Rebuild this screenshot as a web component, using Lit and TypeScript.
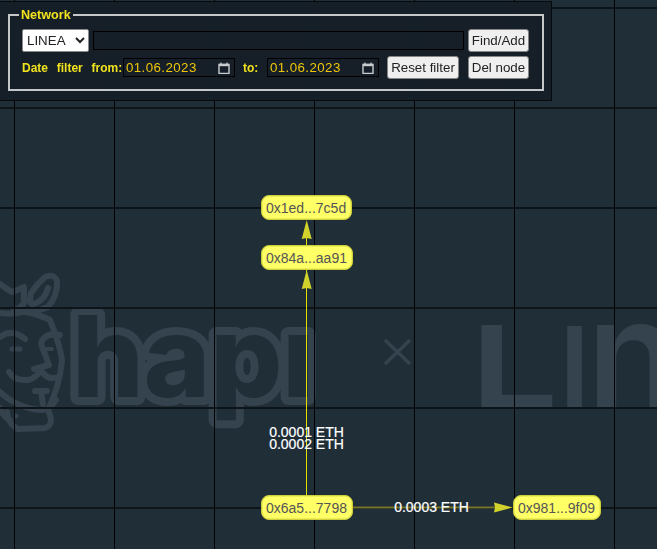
import { LitElement, html, css, svg } from "lit";
import { customElement } from "lit/decorators.js";

const nodes = [
  { label: "0x1ed...7c5d", x: 261, y: 195 },
  { label: "0x84a...aa91", x: 261, y: 245 },
  { label: "0x6a5...7798", x: 261, y: 495 },
  { label: "0x981...9f09", x: 513, y: 495 },
];
const edgeLabels = [
  { label: "0.0001 ETH", x: 306.5, y: 432 },
  { label: "0.0002 ETH", x: 306.5, y: 444 },
  { label: "0.0003 ETH", x: 431.5, y: 507 },
];

@customElement("app-root")
export class AppRoot extends LitElement {
  static styles = css`
    :host { display: block; width: 657px; height: 549px; overflow: hidden; }
    .canvas {
      position: relative; width: 657px; height: 549px; overflow: hidden;
      background-color: #202e38; font-family: "Liberation Sans", Arial, sans-serif;
    }
    .layer { position: absolute; left: 0; top: 0; display: block; }
    .grid {
      position: absolute; inset: 0;
      background-image:
        linear-gradient(90deg, #000 1px, transparent 1px),
        linear-gradient(180deg, #0d151b 2px, transparent 2px);
      background-size: 100px 100px;
      background-position: 14px 0, 0 7px;
    }
    .logo-letters { font-family: "Inter", "Noto Sans", sans-serif; font-weight: 800; }
    .logo-thin { font-family: "Inter", "Liberation Sans", sans-serif; font-weight: 600; }
    .node {
      position: absolute; box-sizing: border-box; height: 25px; padding: 0 5px 0 4px;
      display: flex; align-items: center; justify-content: center;
      background: #ffff66; border: 1px solid #cfcf3c; border-radius: 8px;
      box-shadow: inset 0 0 0 0.5px #dcdc48;
      font-size: 14px; color: #555; white-space: nowrap;
    }
    .edge-label {
      position: absolute; transform: translate(-50%, -50%);
      font-size: 14px; line-height: 14px; color: #fff; white-space: nowrap;
      -webkit-text-stroke: 0.2px #fff;
    }
    .panel {
      position: absolute; left: 0; top: 1px; box-sizing: border-box;
      width: 552px; height: 100px; padding: 6px 7px 0 8px;
      background: rgba(20, 30, 38, 0.88);
      backdrop-filter: blur(3px);
      border: 1px solid #060a0d; border-left: none;
    }
    fieldset {
      margin: 0; box-sizing: border-box; height: 83px; width: 535px; padding: 7px 13px 0 12px;
      border: 2px solid #c4c8c8; display: flex; flex-direction: column;
    }
    legend {
      padding: 0 2px; margin-left: -3px; color: #f0e21e;
      font-size: 12.6px; line-height: 14px; font-weight: 700;
    }
    .row { display: flex; align-items: center; height: 23px; }
    .row + .row { margin-top: 4px; }
    select {
      box-sizing: border-box; width: 67px; height: 23px; margin: 0 4px 0 0;
      font: 13.33px "Liberation Sans", Arial, sans-serif; color: #222;
      background: #fff; border: 1px solid #8a8a8a; border-radius: 2px;
    }
    .search {
      box-sizing: border-box; flex: 1; height: 19px; margin: 0 4px 0 0; padding: 0 4px;
      background: transparent; border: 1px solid #000; outline: none;
    }
    button {
      box-sizing: border-box; height: 23px; padding: 0; margin: 0;
      font: 13.33px "Liberation Sans", Arial, sans-serif; color: #222;
      background: #efefef; border: 1px solid #858585; border-radius: 3px;
    }
    .btn-wide { width: 61px; }
    .btn-reset { width: 72px; margin-right: 9px; }
    .date-label {
      color: #f0e21e; font-size: 12px; font-weight: 700; white-space: nowrap; word-spacing: 5.4px;
    }
    .from { width: 101px; }
    .to { width: 24px; margin-left: 8px; }
    .date {
      box-sizing: border-box; width: 112px; height: 19px; padding: 0 3px 0 2px;
      display: flex; align-items: center; justify-content: space-between;
      border: 1px solid #000; color: #eec60a;
      font-size: 13.33px; letter-spacing: 0.4px;
    }
    .date svg { display: block; margin-right: 1px; }
    .date-b { margin-right: 8px; }
  `;

  private cal() {
    return html`<svg width="12" height="12" viewBox="0 0 12 12" aria-hidden="true">
      <path d="M1 2.5h10v9H1z" fill="none" stroke="#c8ccce" stroke-width="1.4"/>
      <path d="M1 1.8h10v2.4H1z" fill="#c8ccce"/>
      <path d="M3 .5v2M9 .5v2" stroke="#c8ccce" stroke-width="1.2"/>
    </svg>`;
  }

  private logo() {
    const c = "#35434e";
    return svg`<svg class="layer" width="657" height="549" viewBox="0 0 657 549" aria-hidden="true">
      <g fill="none" stroke="${c}" stroke-width="6" stroke-linecap="round" stroke-linejoin="round">
        <path d="M0 313 Q14 315 22 312 Q37 312 48 307 Q58 295 57 281 Q54 273 45 277 Q37 284 31 293 Q28 306 34 304 Q45 300 48 288"/>
        <path d="M0 284 Q8 290 12 292 Q18 290 24 287 L24 303 Q20 309 14 310"/>
        <path d="M26 312 Q40 315 50 320 Q60 345 62 360 Q60 385 48 410 Q55 425 45 428 L18 429 Q8 424 7 412"/>
        <path d="M0 337 Q12 328 25 339"/>
        <path d="M12 349 H20" stroke-width="5"/>
        <path d="M60 335 Q44 332 41 344 L49 365 L34 369"/>
        <path d="M44 349 H52" stroke-width="4"/>
        <path d="M9 372 Q14 381 28 380 Q36 378 41 370 Q47 381 58 377"/>
        <path d="M35 391 H47 M41 391 L43 404"/>
        <path d="M0 392 Q18 409 42 410 Q50 410 56 400"/>
        <path d="M0 408 Q4 418 10 420"/>
      </g>
      <circle cx="16" cy="416" r="2.5" fill="${c}"/>
      <text class="logo-letters" x="72" y="397" font-size="113" fill="#202e38" stroke="${c}" stroke-width="16" stroke-linejoin="round" paint-order="stroke">hapı</text>
      <path d="M385 340 L410 364 M410 340 L385 364" stroke="${c}" stroke-width="3.5" fill="none"/>
      <g class="logo-thin" fill="${c}">
        <text font-size="112" transform="translate(470 407) scale(1.4 1)">L</text>
        <text x="559" y="407" font-size="112">I</text>
        <text x="587" y="407" font-size="150">n</text>
      </g>
    </svg>`;
  }

  private edges() {
    const y = "#d2d22c";
    return svg`<svg class="layer" width="657" height="549" viewBox="0 0 657 549" aria-hidden="true">
      <path d="M306.5 495 V238" stroke="#e2e200" stroke-width="1" fill="none"/>
      <path d="M352 507.5 H496" stroke="#74752b" stroke-width="2" fill="none"/>
      <path d="M306.7 270 L311.7 289 L306.7 288 L301.7 289 Z" fill="${y}"/>
      <path d="M306.7 220 L311.7 239 L306.7 238 L301.7 239 Z" fill="${y}"/>
      <path d="M513 507.5 L494 502.5 L495 507.5 L494 512.5 Z" fill="${y}"/>
    </svg>`;
  }

  render() {
    return html`<div class="canvas">
      ${this.logo()}
      <div class="grid"></div>
      ${this.edges()}
      ${nodes.map((n) => html`<div class="node" style="left:${n.x}px;top:${n.y}px">${n.label}</div>`)}
      ${edgeLabels.map((l) => html`<div class="edge-label" style="left:${l.x}px;top:${l.y}px">${l.label}</div>`)}
      <div class="panel">
        <fieldset>
          <legend>Network</legend>
          <div class="row">
            <select><option>LINEA</option></select>
            <input class="search" type="text" />
            <button class="btn-wide">Find/Add</button>
          </div>
          <div class="row">
            <span class="date-label from">Date filter from:</span>
            <div class="date">01.06.2023 ${this.cal()}</div>
            <span class="date-label to">to:</span>
            <div class="date date-b">01.06.2023 ${this.cal()}</div>
            <button class="btn-reset">Reset filter</button>
            <button class="btn-wide">Del node</button>
          </div>
        </fieldset>
      </div>
    </div>`;
  }
}
